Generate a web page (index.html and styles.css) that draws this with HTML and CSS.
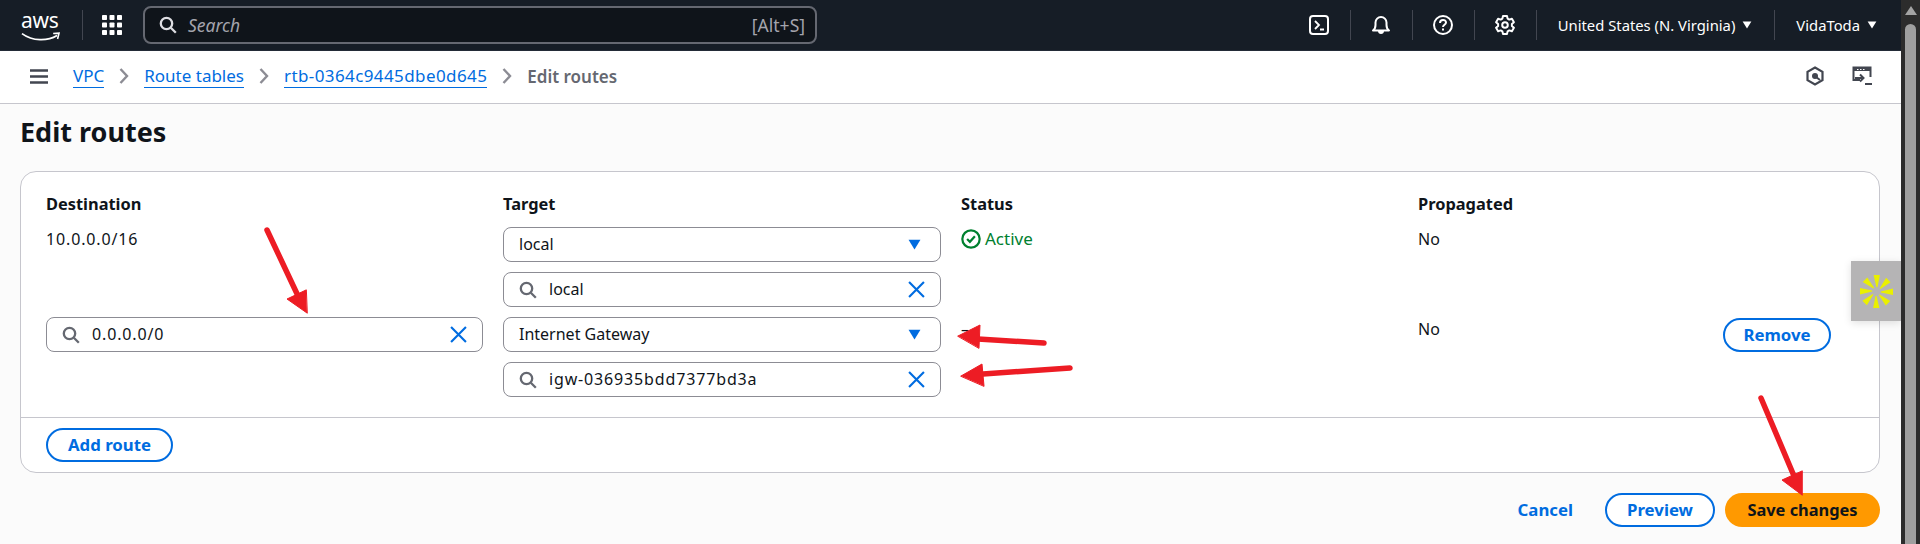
FILE: index.html
```html
<!DOCTYPE html>
<html lang="en">
<head>
<meta charset="utf-8">
<title>Edit routes</title>
<link rel="stylesheet" href="styles.css">
</head>
<body>
<svg class="defs" width="0" height="0" aria-hidden="true">
  <symbol id="i-search" viewBox="0 0 18 18"><circle cx="7.5" cy="7.5" r="5.7" fill="none" stroke="currentColor" stroke-width="2.3"/><path d="M11.8 11.8l5 5" fill="none" stroke="currentColor" stroke-width="2.3"/></symbol>
  <symbol id="i-x" viewBox="0 0 16 16"><path d="M1 1l14 14M15 1L1 15" fill="none" stroke="currentColor" stroke-width="2"/></symbol>
  <symbol id="i-caret" viewBox="0 0 12 10"><path d="M0.5 0.5h11L6 9.5z" fill="currentColor"/></symbol>
  <symbol id="i-chev" viewBox="0 0 10 16"><path d="M1.5 1l6.5 7-6.5 7" fill="none" stroke="currentColor" stroke-width="2.400"/></symbol>
</svg>
<div class="page">
  <header class="topbar">
    <div class="logo">
      <span class="logo-text">aws</span>
      <svg class="logo-smile" viewBox="0 0 40 10"><path d="M1 1.5c11 8 26 8 36 2" fill="none" stroke="#fff" stroke-width="1.8"/><path d="M33 1.5l6-.5-1.5 6" fill="none" stroke="#fff" stroke-width="1.6"/></svg>
    </div>
    <span class="vr vr-logo"></span>
    <svg class="grid-icon" viewBox="0 0 20 20"><g fill="#fff"><rect width="5" height="5" rx=".8"/><rect x="7.5" width="5" height="5" rx=".8"/><rect x="15" width="5" height="5" rx=".8"/><rect y="7.5" width="5" height="5" rx=".8"/><rect x="7.5" y="7.5" width="5" height="5" rx=".8"/><rect x="15" y="7.5" width="5" height="5" rx=".8"/><rect y="15" width="5" height="5" rx=".8"/><rect x="7.5" y="15" width="5" height="5" rx=".8"/><rect x="15" y="15" width="5" height="5" rx=".8"/></g></svg>
    <div class="global-search">
      <svg class="gs-icon"><use href="#i-search"/></svg>
      <span class="gs-placeholder">Search</span>
      <span class="gs-hint">[Alt+S]</span>
    </div>
    <div class="top-actions">
      <svg class="top-icon" viewBox="0 0 20 20"><rect x="1" y="1" width="18" height="18" rx="3" fill="none" stroke="#fff" stroke-width="2"/><path d="M6 6l4 4-4 4M11 14.500h4" fill="none" stroke="#fff" stroke-width="1.800"/></svg>
      <span class="vr"></span>
      <svg class="top-icon" viewBox="0 0 20 20"><path d="M2 15.500c2-1.500 2.500-3 2.500-5.500V7.500a5.500 5.500 0 0 1 11 0V10c0 2.500.5 4 2.500 5.500z" fill="none" stroke="#fff" stroke-width="2" stroke-linejoin="round"/><path d="M7 16h6c0 2-1.200 3-3 3s-3-1-3-3z" fill="#fff"/></svg>
      <span class="vr"></span>
      <svg class="top-icon" viewBox="0 0 20 20"><circle cx="10" cy="10" r="9" fill="none" stroke="#fff" stroke-width="2"/><path d="M7 8c0-4 6-4 6-.5 0 2.300-3 2.300-3 4.500" fill="none" stroke="#fff" stroke-width="2"/><rect x="9" y="13.500" width="2" height="2" fill="#fff"/></svg>
      <span class="vr"></span>
      <svg class="top-icon" viewBox="0 0 20 20"><path d="M8 1h4l.6 2.600 1.700 1 2.600-.8 2 3.400-2 1.800v2l2 1.800-2 3.400-2.600-.8-1.700 1L12 19H8l-.6-2.600-1.700-1-2.600.8-2-3.400 2-1.800v-2l-2-1.800 2-3.400 2.600.8 1.700-1z" fill="none" stroke="#fff" stroke-width="2" stroke-linejoin="round"/><circle cx="10" cy="10" r="2.800" fill="none" stroke="#fff" stroke-width="2"/></svg>
      <span class="vr"></span>
      <span class="menu menu-region">United States (N. Virginia)<svg class="menu-caret"><use href="#i-caret"/></svg></span>
      <span class="vr"></span>
      <span class="menu menu-user">VidaToda<svg class="menu-caret"><use href="#i-caret"/></svg></span>
    </div>
  </header>

  <nav class="crumbbar">
    <svg class="hamburger" viewBox="0 0 18 15"><path d="M0 1.500h18M0 7.500h18M0 13.500h18" stroke="#424650" stroke-width="2.400"/></svg>
    <a class="crumb">VPC</a>
    <svg class="chev"><use href="#i-chev"/></svg>
    <a class="crumb">Route tables</a>
    <svg class="chev"><use href="#i-chev"/></svg>
    <a class="crumb crumb-id">rtb-0364c9445dbe0d645</a>
    <svg class="chev"><use href="#i-chev"/></svg>
    <span class="crumb-current">Edit routes</span>
    <div class="crumb-tools">
      <svg class="tool" viewBox="0 0 20 20"><path d="M10 1.500l7.500 4.300v8.400L10 18.500l-7.500-4.300V5.800z" fill="none" stroke="#424650" stroke-width="2.200"/><circle cx="10" cy="10" r="3" fill="#424650"/><path d="M11 11l4 3" stroke="#424650" stroke-width="2"/></svg>
      <svg class="tool" viewBox="0 0 20 20"><path d="M8 14H1.500V1.500h17V11" fill="none" stroke="#424650" stroke-width="2"/><path d="M1.500 2h17v3h-17z" fill="#424650"/><path d="M5 3.500h1.500M8 3.500h1.500M11 3.500h1.500" stroke="#fff" stroke-width="1.200"/><path d="M3 12h8M8 8.500l3.500 3.500L8 15.500" fill="none" stroke="#424650" stroke-width="2"/><path d="M13 18h7" stroke="#424650" stroke-width="2"/></svg>
    </div>
  </nav>

  <main class="content">
    <h1 class="title">Edit routes</h1>
    <section class="card">
      <div class="routes">
        <div class="cols col-heads">
          <span>Destination</span><span>Target</span><span>Status</span><span>Propagated</span>
        </div>
        <div class="cols">
          <div class="cell num">10.0.0.0/16</div>
          <div class="stack">
            <div class="field"><span class="val val-select">local</span><svg class="f-caret"><use href="#i-caret"/></svg></div>
            <div class="field"><svg class="f-search"><use href="#i-search"/></svg><span class="val">local</span><svg class="f-x"><use href="#i-x"/></svg></div>
          </div>
          <div class="cell status">
            <svg class="ok" viewBox="0 0 18 18"><circle cx="9" cy="9" r="7.800" fill="none" stroke="currentColor" stroke-width="2"/><path d="M5.500 9l2.500 2.500 4.500-5" fill="none" stroke="currentColor" stroke-width="2"/></svg>Active
          </div>
          <div class="cell">No</div>
        </div>
        <div class="cols">
          <div class="field"><svg class="f-search"><use href="#i-search"/></svg><span class="val num">0.0.0.0/0</span><svg class="f-x"><use href="#i-x"/></svg></div>
          <div class="stack">
            <div class="field"><span class="val val-select">Internet Gateway</span><svg class="f-caret"><use href="#i-caret"/></svg></div>
            <div class="field"><svg class="f-search"><use href="#i-search"/></svg><span class="val num">igw-036935bdd7377bd3a</span><svg class="f-x"><use href="#i-x"/></svg></div>
          </div>
          <div class="cell">–</div>
          <div class="cell cell-action">No<button class="btn btn-remove">Remove</button></div>
        </div>
      </div>
      <div class="card-foot"><button class="btn btn-add">Add route</button></div>
    </section>
    <div class="actions">
      <button class="btn btn-link">Cancel</button>
      <button class="btn btn-preview">Preview</button>
      <button class="btn btn-primary">Save changes</button>
    </div>
  </main>

  <aside class="widget">
    <svg class="widget-star" viewBox="0 0 36 36"><g fill="#eaf000"><path d="M15 1h6.500l-2.500 12.500h-1z"/><path d="M15 1h6.500l-2.500 12.500h-1z" transform="rotate(45 18 18)"/><path d="M15 1h6.500l-2.500 12.500h-1z" transform="rotate(90 18 18)"/><path d="M15 1h6.500l-2.500 12.500h-1z" transform="rotate(135 18 18)"/><path d="M15 1h6.500l-2.500 12.500h-1z" transform="rotate(180 18 18)"/><path d="M15 1h6.500l-2.500 12.500h-1z" transform="rotate(225 18 18)"/><path d="M15 1h6.500l-2.500 12.500h-1z" transform="rotate(270 18 18)"/><path d="M15 1h6.500l-2.500 12.500h-1z" transform="rotate(315 18 18)"/></g></svg>
  </aside>

  <svg class="annotations" viewBox="0 0 1901 544">
    <g fill="#ed1c24" stroke="#ed1c24" stroke-linecap="round">
      <path d="M267 230L299 298" stroke-width="5.500" fill="none"/><path d="M307 313l-20-14 19-9z" stroke-width="1"/>
      <path d="M1044 343L978 339" stroke-width="5.500" fill="none"/><path d="M958 336l22-11-1 23z" stroke-width="1"/>
      <path d="M1070 368L983 374" stroke-width="5.500" fill="none"/><path d="M961 376l21-12 2 22z" stroke-width="1"/>
      <path d="M1761 398L1794 476" stroke-width="5.500" fill="none"/><path d="M1802 495l-20-15 20-9z" stroke-width="1"/>
    </g>
  </svg>
</div>
<div class="scrollbar">
  <span class="sb-arrow"></span>
  <span class="sb-thumb"></span>
</div>
</body>
</html>
```
FILE: styles.css
```css
* { box-sizing: border-box; }
html, body { margin: 0; height: 544px; overflow: hidden; }
body {
  display: flex;
  font-family: "Noto Sans", "Open Sans", sans-serif;
  font-size: 16px;
  color: #0f141a;
  background: #fbfbfb;
}
.defs { position: absolute; }
.page { position: relative; width: 1901px; height: 544px; flex: none; overflow: hidden; }

/* scrollbar */
.scrollbar { flex: 1; background: #2c2c2c; display: flex; flex-direction: column; align-items: center; }
.sb-arrow { margin-top: 6px; width: 0; height: 0; border-left: 6.500px solid transparent; border-right: 6.500px solid transparent; border-bottom: 9px solid #a3a3a3; }
.sb-thumb { margin-top: 9px; flex: 1; width: 11px; background: #9f9f9f; border-radius: 6px 6px 0 0; }

/* top bar */
.topbar { height: 51px; background: #161d26; border-bottom: 1px solid #232b37; display: flex; align-items: center; padding-left: 21px; color: #fff; }
.logo { width: 39px; height: 36px; position: relative; flex: none; }
.logo-text { position: absolute; left: 0; top: 0; font-size: 21px; line-height: 26px; letter-spacing: -0.300px; color: #fff; }
.logo-smile { position: absolute; left: 0; top: 24px; width: 39px; height: 12px; }
.vr { width: 1px; height: 30px; background: #424650; flex: none; }
.vr-logo { margin-left: 22px; }
.grid-icon { width: 20px; height: 20px; margin-left: 19px; flex: none; }
.global-search { margin-left: 21px; width: 674px; height: 38px; border: 2px solid #656871; border-radius: 8px; background: #0f141a; display: flex; align-items: center; padding: 0 10px 0 14px; flex: none; }
.gs-icon { width: 18px; height: 18px; color: #dedee3; flex: none; }
.gs-placeholder { margin-left: 11px; font-style: italic; font-size: 17.500px; color: #a4a4ad; }
.gs-hint { margin-left: auto; font-size: 17.500px; color: #a4a4ad; }
.top-actions { margin-left: auto; display: flex; align-items: center; margin-right: 24px; }
.top-icon { width: 20px; height: 20px; margin: 0 21px 0 20px; flex: none; }
.menu { font-size: 14.800px; color: #fff; display: flex; align-items: center; white-space: nowrap; }
.menu-region { margin: 0 22px 0 21px; }
.menu-user { margin-left: 21px; }
.menu-caret { width: 10px; height: 8px; margin-left: 7px; color: #fff; }

/* breadcrumbs */
.crumbbar { height: 53px; background: #fff; border-bottom: 1px solid #c6c6cd; display: flex; align-items: center; padding: 0 29px 2px 30px; }
.hamburger { width: 18px; height: 15px; margin-right: 25px; flex: none; }
.crumb { color: #006ce0; font-size: 17px; line-height: 22px; border-bottom: 1px solid #006ce0; text-decoration: none; }
.crumb-id { letter-spacing: .4px; }
.chev { width: 10px; height: 16px; margin: 0 15px; color: #8c8c94; flex: none; }
.crumb-current { font-size: 17px; font-weight: 600; color: #656871; }
.crumb-tools { margin-left: auto; display: flex; gap: 27px; }
.tool { width: 20px; height: 20px; }

/* content */
.content { padding: 0 21px 0 20px; }
.title { margin: 0; height: 67px; font-size: 27px; font-weight: 700; line-height: 32px; padding-top: 12px; }
.card { height: 302px; background: #fff; border: 1px solid #c6c6cd; border-radius: 16px; display: flex; flex-direction: column; }
.routes { flex: 1; padding: 21px 48px 0 25px; display: flex; flex-direction: column; gap: 10px; }
.cols { display: grid; grid-template-columns: 437px 438px 437px 1fr; column-gap: 20px; align-items: start; }
.col-heads { font-weight: 700; font-size: 16.400px; line-height: 22px; margin-bottom: 2px; }
.cell { line-height: 22px; padding-top: 1px; font-size: 16px; }
.num { letter-spacing: .85px; }
.cell-action { display: flex; justify-content: space-between; align-items: flex-start; }
.stack { display: flex; flex-direction: column; gap: 10px; }
.field { height: 35px; border: 1px solid #8c8c94; border-radius: 8px; background: #fff; display: flex; align-items: center; padding: 0 15px; }
.val { font-size: 16px; line-height: 22px; margin-left: 12px; padding-bottom: 2px; }
.val-select { margin-left: 0; }
.f-search { width: 18px; height: 18px; color: #656871; flex: none; }
.f-x { width: 17px; height: 17px; color: #006ce0; margin-left: auto; flex: none; }
.f-caret { width: 13px; height: 11px; color: #006ce0; margin-left: auto; margin-right: 4px; flex: none; }
.status { color: #00802f; font-size: 17px; display: flex; align-items: center; gap: 4px; }
.ok { width: 20px; height: 20px; flex: none; }
.card-foot { border-top: 1px solid #c6c6cd; padding: 10px 25px; height: 55px; }

/* buttons */
.btn { height: 34px; padding: 0; border: 2px solid #006ce0; border-radius: 17px; background: #fff; color: #006ce0; font: 700 16.800px/1 "Noto Sans", "Open Sans", sans-serif; white-space: nowrap; }
.btn-remove { width: 108px; }
.btn-add { width: 127px; }
.actions { margin-top: 20px; display: flex; justify-content: flex-end; align-items: center; gap: 10px; }
.btn-link { border: 0; background: none; padding: 0 22px 0 0; }
.btn-preview { width: 110px; }
.btn-primary { width: 155px; border: 0; background: #ff9900; color: #0f141a; font-size: 16.400px; }

/* overlays */
.widget { position: absolute; left: 1851px; top: 261px; width: 50px; height: 60px; background: #b5b4b5; box-shadow: 0 2px 8px rgba(0,0,0,.12); display: flex; align-items: center; justify-content: center; }
.widget-star { width: 35px; height: 35px; }
.annotations { position: absolute; left: 0; top: 0; width: 1901px; height: 544px; pointer-events: none; }
```
